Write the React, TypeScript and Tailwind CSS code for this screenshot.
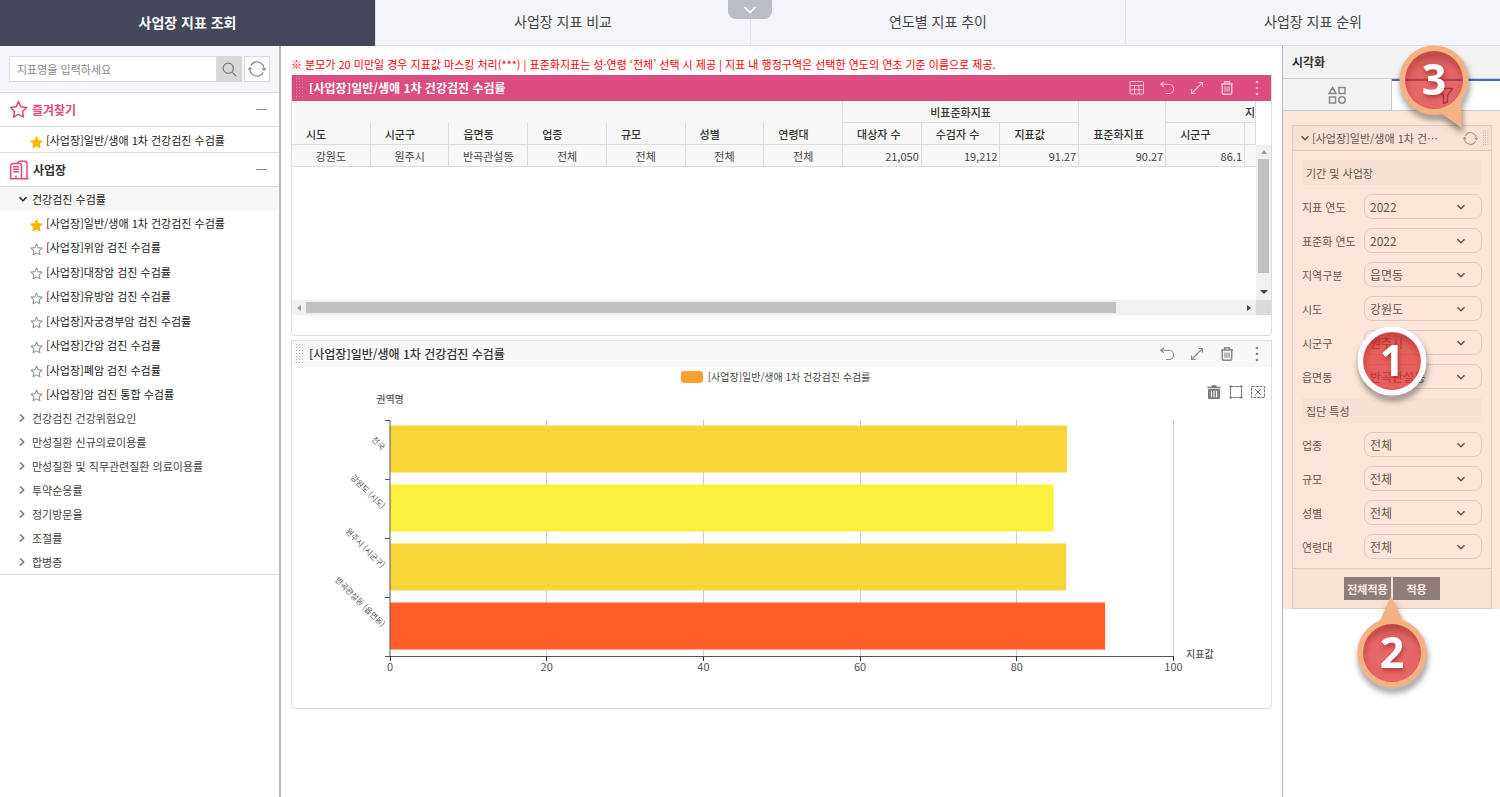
import { useState } from "react";
import type { ReactNode } from "react";

const pageTabs = ["사업장 지표 조회", "사업장 지표 비교", "연도별 지표 추이", "사업장 지표 순위"];

const indicators = [
  "[사업장]일반/생애 1차 건강검진 수검률",
  "[사업장]위암 검진 수검률",
  "[사업장]대장암 검진 수검률",
  "[사업장]유방암 검진 수검률",
  "[사업장]자궁경부암 검진 수검률",
  "[사업장]간암 검진 수검률",
  "[사업장]폐암 검진 수검률",
  "[사업장]암 검진 통합 수검률",
];

const categories = [
  "건강검진 건강위험요인",
  "만성질환 신규의료이용률",
  "만성질환 및 직무관련질환 의료이용률",
  "투약순응률",
  "정기방문율",
  "조절률",
  "합병증",
];

const bars = [
  { label: "전국", value: 86.4, color: "#f9d637" },
  { label: "강원도 (시도)", value: 84.7, color: "#faf13c" },
  { label: "원주시 (시군구)", value: 86.3, color: "#f9d637" },
  { label: "반곡관설동 (읍면동)", value: 91.27, color: "#ff5f27" },
];

const periodFilters = [
  { label: "지표 연도", value: "2022" },
  { label: "표준화 연도", value: "2022" },
  { label: "지역구분", value: "읍면동" },
  { label: "시도", value: "강원도" },
  { label: "시군구", value: "원주시" },
  { label: "읍면동", value: "반곡관설동" },
];

const groupFilters = [
  { label: "업종", value: "전체" },
  { label: "규모", value: "전체" },
  { label: "성별", value: "전체" },
  { label: "연령대", value: "전체" },
];

function Star({ filled, className }: { filled?: boolean; className: string }) {
  return (
    <svg viewBox="0 0 24 24" className={className} fill={filled ? "#ffb400" : "none"} stroke={filled ? "#ffb400" : "currentColor"} strokeWidth="2" strokeLinejoin="round" aria-hidden="true">
      <path d="M12 2l3.1 6.6 7.1.9-5.2 5 1.3 7.2L12 18.2l-6.3 3.5L7 14.5l-5.2-5 7.1-.9z" />
    </svg>
  );
}

function Building() {
  return (
    <svg viewBox="0 0 20 20" className="h-5 w-5 shrink-0 text-[#db4c80]" fill="none" stroke="currentColor" strokeWidth="1.5" aria-hidden="true">
      <path d="M.5 18.8h19M1.700 18.500V6a2.500 2.500 0 0 1 2.500-2.500h6.300a2 2 0 0 1 2 2v13M8.500 3a2.500 2.500 0 0 1 2.300-1.800h4.700a2.500 2.500 0 0 1 2.500 2.500v14.800M4 6.700h6M4 9.200h6M4 11.700h6M7 18.500v-3" />
    </svg>
  );
}

function Chevron({ className }: { className: string }) {
  return (
    <svg viewBox="0 0 10 10" className={className} fill="none" stroke="currentColor" strokeWidth="1.5" aria-hidden="true">
      <path d="M1.500 3.200L5 6.700l3.500-3.500" />
    </svg>
  );
}

function Refresh({ className }: { className: string }) {
  return (
    <svg viewBox="0 0 20 20" className={className} fill="none" stroke="currentColor" strokeWidth="1.4" aria-hidden="true">
      <path d="M3.200 6.200A7.800 7.800 0 0 1 17.800 10.500M16.800 13.800A7.800 7.800 0 0 1 2.200 9.500" />
      <path d="M15.800 9.300l2 2 2-2M.2 10.700l2-2 2 2" />
    </svg>
  );
}

function DotGrip({ className }: { className: string }) {
  return (
    <svg viewBox="0 0 8 20" className={className} fill="currentColor" aria-hidden="true">
      {[0, 1, 2, 3, 4, 5, 6].map((r) => [0, 1, 2].map((c) => <rect key={`${r}-${c}`} x={c * 3} y={r * 3} width="1" height="1" />))}
    </svg>
  );
}

function IconButton({ label, children }: { label: string; children: ReactNode }) {
  return (
    <button type="button" aria-label={label} className="flex h-5 w-5 items-center justify-center">
      {children}
    </button>
  );
}

function PanelTools({ withGrid }: { withGrid?: boolean }) {
  return (
    <div className="flex items-center gap-[10px] pr-1">
      {withGrid && (
        <IconButton label="표">
          <svg viewBox="0 0 16 16" className="h-4 w-4" fill="none" stroke="currentColor" aria-hidden="true">
            <rect x="1" y="1.500" width="13.500" height="12.500" rx="1" />
            <path d="M1 5.500h13.500M1 9.700h13.500M5.500 5.500V14M10 5.500V14" />
          </svg>
        </IconButton>
      )}
      <IconButton label="되돌리기">
        <svg viewBox="0 0 16 16" className="h-4 w-4" fill="none" stroke="currentColor" strokeWidth="1.100" aria-hidden="true">
          <path d="M5 1.800L1.700 4.300l3.300 2.500M1.700 4.300H10a4.600 4.600 0 0 1 0 9.200H7" />
        </svg>
      </IconButton>
      <IconButton label="확대">
        <svg viewBox="0 0 16 16" className="h-4 w-4" fill="none" stroke="currentColor" strokeWidth="1.100" aria-hidden="true">
          <path d="M2.500 13.500l11-11M9.500 2.500h4v4M2.500 9.500v4h4" />
        </svg>
      </IconButton>
      <IconButton label="삭제">
        <svg viewBox="0 0 16 16" className="h-4 w-4" fill="none" stroke="currentColor" strokeWidth="1.500" aria-hidden="true">
          <path d="M2 4h12M5.500 3.700V1.800h5v1.900M3.300 4v9a1.200 1.200 0 0 0 1.200 1.200h7a1.200 1.200 0 0 0 1.200-1.200V4" />
          <path d="M6 6.500v5.200M8 6.500v5.200M10 6.500v5.200" strokeWidth="1.100" />
        </svg>
      </IconButton>
      <IconButton label="더보기">
        <svg viewBox="0 0 4 16" className="h-4 w-1" fill="currentColor" aria-hidden="true">
          <circle cx="2" cy="2" r="1.300" />
          <circle cx="2" cy="8" r="1.300" />
          <circle cx="2" cy="14" r="1.300" />
        </svg>
      </IconButton>
    </div>
  );
}

function SectionHead({ icon, title, pink }: { icon: ReactNode; title: string; pink?: boolean }) {
  return (
    <div className="flex h-[34px] items-center border-b border-[#dcdcdc] pr-3 pl-[9px]">
      {icon}
      <h2 className={pink ? "ml-1 flex-1 text-[12px] font-bold text-[#db4c80]" : "ml-1 flex-1 text-[12px] font-bold text-[#333]"}>{title}</h2>
      <button type="button" aria-label={`${title} 접기`} className="flex h-4 items-center">
        <span className="h-px w-[11px] bg-[#888]" />
      </button>
    </div>
  );
}

function IndicatorRow({ name, filled }: { name: string; filled?: boolean }) {
  return (
    <li>
      <a href="#" className="flex h-6 items-center pl-[30px] text-[11px] text-[#222]">
        <Star filled={filled} className="mt-1 mr-[3px] h-[13px] w-[13px] shrink-0 text-[#999]" />
        <span className="whitespace-nowrap">{name}</span>
      </a>
    </li>
  );
}

function Sidebar() {
  return (
    <aside className="w-[281px] shrink-0 border-r-2 border-[#bbb]">
      <form className="flex h-[47px] items-center border-b border-[#dcdcdc] bg-[#f5f6f9] px-[9px]">
        <input aria-label="지표명" placeholder="지표명을 입력하세요" className="h-[26px] min-w-0 flex-1 border border-[#d9dbdf] bg-white px-[7px] text-[11px] outline-none placeholder:text-[#888]" />
        <button type="button" aria-label="검색" className="flex h-[26px] w-[25px] items-center justify-center bg-[#d8d8d8] text-[#777]">
          <svg viewBox="0 0 16 16" className="h-[15px] w-[15px]" fill="none" stroke="currentColor" strokeWidth="1.300" aria-hidden="true">
            <circle cx="6.700" cy="6.700" r="5.500" />
            <path d="M11 11l4 4" />
          </svg>
        </button>
        <button type="button" aria-label="새로고침" className="ml-[2px] flex h-[26px] w-[26px] items-center justify-center border border-[#d9dbdf] bg-white text-[#8a8a8a]">
          <Refresh className="h-[18px] w-[18px]" />
        </button>
      </form>
      <SectionHead pink title="즐겨찾기" icon={<Star className="h-[19px] w-[19px] text-[#db4c80]" />} />
      <ul className="border-b border-[#dcdcdc] pt-px">
        <IndicatorRow filled name={indicators[0]} />
      </ul>
      <SectionHead title="사업장" icon={<Building />} />
      <div className="border-b border-[#dcdcdc]">
        <button type="button" className="flex h-6 w-full items-center bg-[#f7f7f7] pl-[18px] text-[11px] text-[#222]">
          <Chevron className="mr-1 h-[10px] w-[10px]" />
          건강검진 수검률
        </button>
        <ul className="flex h-[195px] flex-col justify-between">
          {indicators.map((n, i) => (
            <IndicatorRow key={n} name={n} filled={i === 0} />
          ))}
        </ul>
        {categories.map((c) => (
          <button key={c} type="button" className="flex h-6 w-full items-center pl-[17px] text-[11px] text-[#444]">
            <Chevron className="mr-[5px] h-[10px] w-[10px] -rotate-90 text-[#777]" />
            {c}
          </button>
        ))}
      </div>
    </aside>
  );
}

const cell = "h-[22px] border-r border-b border-[#ddd] whitespace-nowrap";

function DataTable() {
  const dims = ["시도", "시군구", "읍면동", "업종", "규모", "성별", "연령대"];
  const values = ["강원도", "원주시", "반곡관설동", "전체", "전체", "전체", "전체"];
  return (
    <div className="flex h-[199px]">
      <div className="min-w-0 flex-1 overflow-hidden">
        <table className="w-full table-fixed border-separate border-spacing-0 bg-[#f7f7f7] text-[11px] text-[#444]">
          <colgroup>
            {[...Array(10)].map((_, i) => <col key={i} />)}
            <col className="w-[87px]" />
            <col />
            <col className="w-[11px]" />
          </colgroup>
          <thead className="text-[#333]">
            <tr>
              <th colSpan={7} className="h-[22px] border-r border-[#ddd]" />
              <th colSpan={3} className={`${cell} font-medium`}>비표준화지표</th>
              <th rowSpan={2} className="border-r border-b border-[#ddd] pb-[2px] pl-[14px] text-left align-bottom font-medium">표준화지표</th>
              <th colSpan={2} className={`${cell} overflow-hidden text-right font-medium`}>지</th>
            </tr>
            <tr>
              {dims.map((d) => <th key={d} className={`${cell} pl-[14px] text-left font-medium`}>{d}</th>)}
              {["대상자 수", "수검자 수", "지표값"].map((d) => <th key={d} className={`${cell} pl-[14px] text-left font-medium`}>{d}</th>)}
              <th className={`${cell} pl-[14px] text-left font-medium`}>시군구</th>
              <th className={cell} />
            </tr>
          </thead>
          <tbody>
            <tr>
              {values.map((v, i) => <td key={i} className={`${cell} text-center`}>{v}</td>)}
              {["21,050", "19,212", "91.27", "90.27", "86.1"].map((v) => <td key={v} className={`${cell} pr-[2px] text-right`}>{v}</td>)}
              <td className="h-[22px] border-b border-[#ddd]" />
            </tr>
          </tbody>
        </table>
      </div>
      <div className="mt-11 flex w-[15px] flex-col items-center bg-[#f0f0f0]">
        <span className="my-[5px] border-x-[3px] border-b-4 border-x-transparent border-b-[#999]" />
        <span className="h-[114px] w-[11px] bg-[#c1c1c1]" />
        <span className="mt-auto mb-[6px] border-x-4 border-t-4 border-x-transparent border-t-[#444]" />
      </div>
    </div>
  );
}

function Chart() {
  const x0 = 98;
  const unit = 7.835;
  return (
    <svg viewBox="0 0 979 321" className="block h-auto w-full" role="img" aria-label="권역명별 지표값" fontSize="11">
      {[20, 40, 60, 80, 100].map((t) => (
        <path key={t} d={`M${Math.floor(x0 + t * unit) + 0.5} 33V269`} stroke="#ccc" />
      ))}
      {bars.map((b, i) => (
        <g key={b.label}>
          <rect x={x0} y={38.5 + i * 59} width={b.value * unit} height="47" fill={b.color} />
          <text x="92" y={61 + i * 59} fontSize="8" fill="#555" textAnchor="end" dominantBaseline="central" transform={`rotate(45 92 ${61 + i * 59})`}>
            {b.label}
          </text>
        </g>
      ))}
      <path d="M98 33V269.500M93 33.500h5M93 92.500h5M93 151.500h5M93 210.500h5M93 269.500H882" stroke="#555" fill="none" />
      {[0, 20, 40, 60, 80, 100].map((t) => (
        <g key={t}>
          <path d={`M${Math.floor(x0 + t * unit) + 0.5} 269v5`} stroke="#333" />
          <text x={x0 + t * unit} y="279" fill="#555" textAnchor="middle" dominantBaseline="central">{t}</text>
        </g>
      ))}
      <text x="98" y="11" fontSize="10" fontWeight="500" fill="#555" textAnchor="middle" dominantBaseline="central">권역명</text>
      <text x="894" y="266" fontSize="10" fontWeight="500" fill="#555" dominantBaseline="central">지표값</text>
    </svg>
  );
}

function ChartToolbox() {
  return (
    <div className="absolute top-[15px] right-[3px] flex gap-[2px] text-[#777]">
      <IconButton label="지우기">
        <svg viewBox="0 0 14 14" className="h-[14px] w-[14px]" fill="none" stroke="currentColor" aria-hidden="true">
          <path d="M.5 2.500h13M4.500 1h5" strokeWidth="1.600" />
          <path d="M1.500 4.500h11v9h-11z" fill="#888" />
          <path d="M4.500 6v6M7 6v6M9.500 6v6" stroke="#fff" />
        </svg>
      </IconButton>
      <IconButton label="영역 선택">
        <svg viewBox="0 0 14 14" className="h-[14px] w-[14px]" fill="none" stroke="currentColor" aria-hidden="true">
          <path d="M1.500 1.500h11v11h-11z" strokeDasharray="4 .5" />
          <path d="M.5.5h2v2h-2zM11.500.5h2v2h-2zM.5 11.500h2v2h-2zM11.500 11.500h2v2h-2z" fill="currentColor" stroke="none" />
        </svg>
      </IconButton>
      <IconButton label="선택 해제">
        <svg viewBox="0 0 16 14" className="h-[14px] w-4" fill="none" stroke="currentColor" aria-hidden="true">
          <rect x="1.500" y="1.500" width="13" height="11" strokeDasharray="3 1" />
          <path d="M5 4l6 6M11 4l-6 6" />
        </svg>
      </IconButton>
    </div>
  );
}

function Main() {
  const title = "[사업장]일반/생애 1차 건강검진 수검률";
  return (
    <main className="min-w-0 flex-1 px-[10px] pt-2">
      <p className="h-[21px] text-[11px] leading-5 whitespace-nowrap text-[#f00]">
        ※ 분모가 20 미만일 경우 지표값 마스킹 처리(***)<span className="mx-[3px]">|</span>표준화지표는 성·연령 ‘전체’ 선택 시 제공<span className="mx-[3px]">|</span>지표 내 행정구역은 선택한 연도의 연초 기준 이름으로 제공.
      </p>
      <section className="rounded-b-sm border border-t-0 border-[#ddd]">
        <header className="flex h-[26px] items-center bg-[#dc4c81] pl-1 text-[#f5c3d5]">
          <DotGrip className="h-5 w-2 text-[#eb8fb1]" />
          <h3 className="ml-[5px] flex-1 text-[12px] font-bold text-white">{title}</h3>
          <PanelTools withGrid />
        </header>
        <DataTable />
        <div className="mb-5 flex h-[15px] items-center bg-[#f0f0f0]">
          <span className="mx-[5px] border-y-[3px] border-r-4 border-y-transparent border-r-[#999]" />
          <div className="flex flex-1 items-center">
            <span className="h-[11px] w-[86.500%] bg-[#c1c1c1]" />
          </div>
          <span className="mx-[5px] border-y-[3px] border-l-4 border-y-transparent border-l-[#444]" />
          <span className="h-full w-[15px] bg-[#dadada]" />
        </div>
      </section>
      <section className="mt-1 rounded-b-sm border border-[#ddd]">
        <header className="flex h-[26px] items-center bg-[#f8f8f8] pl-1 text-[#888]">
          <DotGrip className="h-5 w-2 text-[#aaa]" />
          <h3 className="ml-[5px] flex-1 text-[12px] font-medium text-[#333]">{title}</h3>
          <PanelTools />
        </header>
        <div className="relative">
          <div className="flex h-5 items-center justify-center gap-[5px] pr-3 text-[10px] text-[#444]">
            <span className="h-3 w-[22px] rounded-[3px] bg-[#fca130]" />
            {title}
          </div>
          <Chart />
          <ChartToolbox />
        </div>
      </section>
    </main>
  );
}

function FilterRow({ label, value }: { label: string; value: string }) {
  const [selected, setSelected] = useState(value);
  return (
    <div className="flex items-center">
      <label htmlFor={`f-${label}`} className="w-[62px] shrink-0 text-[11px] whitespace-nowrap text-[#66544c]">{label}</label>
      <div className="relative flex-1">
        <select id={`f-${label}`} value={selected} onChange={(e) => setSelected(e.target.value)} className="block h-[25px] w-full appearance-none rounded-lg border border-[#e3cabd] bg-transparent pl-[5px] text-[12px] text-[#66544c]">
          <option>{value}</option>
        </select>
        <Chevron className="pointer-events-none absolute top-2 right-4 h-[10px] w-[10px] text-[#66544c]" />
      </div>
    </div>
  );
}

function Callout({ id, n, ring, tail, className }: { id: string; n: number; ring: string; tail?: string; className: string }) {
  return (
    <svg viewBox="-50 -70 100 140" className={`pointer-events-none absolute h-[140px] w-[100px] overflow-visible ${className}`} aria-hidden="true">
      <defs>
        <linearGradient id={id} x1="0" y1="0" x2="0" y2="1">
          <stop offset="0" stopColor="#c52626" stopOpacity="0.740" />
          <stop offset="0.350" stopColor="#dc2c2c" stopOpacity="0.720" />
          <stop offset="1" stopColor="#dc2c2c" stopOpacity="0.720" />
        </linearGradient>
      </defs>
      <g className="drop-shadow-[1px_5px_3px_rgba(0,0,0,0.45)]">
        {tail && <path d={tail} fill={ring} />}
        <circle r="31.500" fill="none" stroke={ring} strokeWidth="6" />
      </g>
      <circle r="29" fill={`url(#${id})`} />
      <text textAnchor="middle" y="15" fontSize="43" fontWeight="700" fontFamily="'Noto Sans', 'Open Sans', sans-serif" fill="#fff" className="drop-shadow-[1px_3px_2px_rgba(120,0,0,0.4)]">{n}</text>
    </svg>
  );
}

function FilterPanel() {
  return (
    <aside className="relative w-[218px] shrink-0 border-l border-[#bbb]">
      <h2 className="flex h-[33px] items-center border-b border-[#ccc] bg-[#f2f2f2] pl-[9px] text-[12px] font-bold text-[#333]">시각화</h2>
      <div className="flex h-8 border-b border-[#ccc]">
        <button type="button" aria-label="시각화 유형" className="flex flex-1 items-center justify-center border-r border-[#ccc] bg-[#f2f2f2] text-[#888]">
          <svg viewBox="0 0 18 18" className="h-[18px] w-[18px]" fill="none" stroke="currentColor" strokeWidth="1.500" aria-hidden="true">
            <path d="M4.500 1.500L8 7.500H1zM11 1.500h6v6h-6zM1.500 11h6v6h-6z" />
            <circle cx="14" cy="14" r="3.200" />
          </svg>
        </button>
        <button type="button" aria-label="필터" className="flex flex-1 items-center justify-center border-t-2 border-[#5068b0] bg-white text-[#2f4490]">
          <svg viewBox="0 0 18 18" className="h-[18px] w-[18px]" fill="none" stroke="currentColor" strokeWidth="1.500" strokeLinejoin="round" aria-hidden="true">
            <path d="M1.500 1.500h14L10.500 8.500v6.500l-4 1.500v-8z" />
          </svg>
        </button>
      </div>
      <div className="bg-[#fde6d9] pt-[14px] pr-2 pl-[9px]">
        <form className="border border-[#e3cabd]">
          <header className="flex h-[25px] items-center border-b border-[#e3cabd] bg-[#f8e1d5] pr-[2px] pl-[7px] text-[#66544c]">
            <Chevron className="mr-[2px] h-[10px] w-[10px]" />
            <h3 className="flex-1 text-[11px] whitespace-nowrap">[사업장]일반/생애 1차 건⋯</h3>
            <button type="button" aria-label="초기화" className="mr-[5px] text-[#ab968b]">
              <Refresh className="h-[15px] w-[15px]" />
            </button>
            <DotGrip className="h-4 w-[6px] text-[#ab968b]" />
          </header>
          <div className="grid gap-[9px] px-[9px] py-[9px]">
            <h4 className="flex h-[25px] items-center bg-[#f7e1d5] pl-1 text-[11px] text-[#66544c]">기간 및 사업장</h4>
            {periodFilters.map((f) => <FilterRow key={f.label} {...f} />)}
            <h4 className="flex h-[25px] items-center bg-[#f7e1d5] pl-1 text-[11px] text-[#66544c]">집단 특성</h4>
            {groupFilters.map((f) => <FilterRow key={f.label} {...f} />)}
          </div>
          <footer className="flex h-10 items-center justify-center gap-[2px] border-t border-[#e3cabd] bg-[#f8e1d5]">
            <button type="button" className="h-[23px] w-[47px] bg-[#8f7d7b] text-[11px] font-bold whitespace-nowrap text-[#fde9de]">전체적용</button>
            <button type="button" className="h-[23px] w-[47px] bg-[#8f7d7b] text-[11px] font-bold whitespace-nowrap text-[#fde9de]">적용</button>
          </footer>
        </form>
      </div>
      <Callout id="c3" n={3} ring="#f4b183" tail="M6 33L28 48L27 18z" className="top-[-36px] left-[101px]" />
      <Callout id="c1" n={1} ring="#ffffff" className="top-[245px] left-[59px]" />
      <Callout id="c2" n={2} ring="#f4b183" tail="M-13 -30L-1 -57L12 -30z" className="top-[537px] left-[59px]" />
    </aside>
  );
}

export default function App() {
  const [active, setActive] = useState(0);
  return (
    <div lang="ko" className="flex min-h-screen flex-col overflow-x-hidden bg-white font-[family-name:'Noto_Sans_CJK_KR','Noto_Sans_CJK_SC',sans-serif] text-[12px] leading-4">
      <nav className="relative grid h-[46px] shrink-0 grid-cols-4 border-b border-[#dfe1e5] bg-[#f4f5f8]">
        {pageTabs.map((t, i) => (
          <button
            key={t}
            type="button"
            onClick={() => setActive(i)}
            className={i === active ? "-mb-px bg-[#44465a] pb-[3px] text-[14px] font-bold text-white" : "border-l border-[#dfe1e5] pb-[3px] text-[14px] text-[#444]"}
          >
            {t}
          </button>
        ))}
        <button type="button" aria-label="메뉴 펼치기" className="absolute top-0 left-1/2 flex h-[19px] w-11 -translate-x-1/2 items-center justify-center rounded-b-lg bg-[#babdc6] text-white">
          <svg viewBox="0 0 14 8" className="h-2 w-[14px]" fill="none" stroke="currentColor" strokeWidth="1.600" aria-hidden="true">
            <path d="M1.500 1l5.500 5.500L12.500 1" />
          </svg>
        </button>
      </nav>
      <div className="flex flex-1">
        <Sidebar />
        <Main />
        <FilterPanel />
      </div>
    </div>
  );
}
